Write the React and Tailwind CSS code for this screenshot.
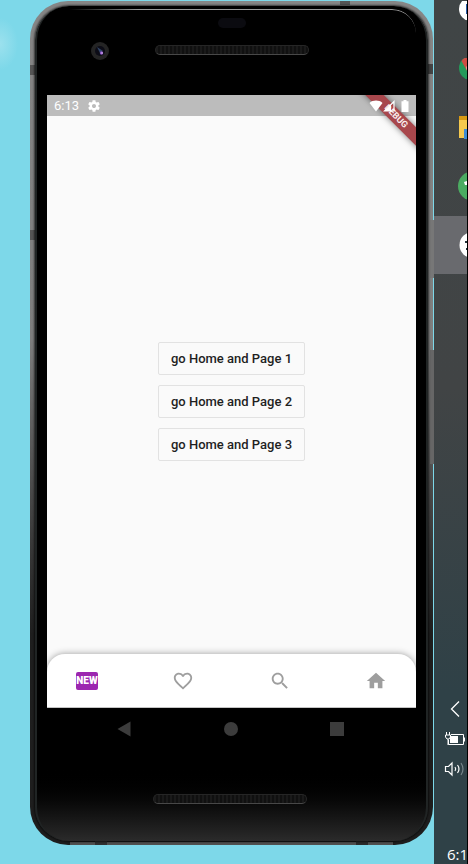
import React from "react";

const pages = [1, 2, 3];

function Gear() {
  return (
    <svg viewBox="0 0 24 24" className="size-3.5" fill="currentColor" aria-hidden="true">
      <path d="M19.43 12.98c.04-.32.07-.64.07-.98s-.03-.66-.07-.98l2.11-1.65c.19-.15.24-.42.12-.64l-2-3.46c-.12-.22-.39-.3-.61-.22l-2.49 1c-.52-.4-1.08-.73-1.69-.98l-.38-2.65C14.46 2.18 14.25 2 14 2h-4c-.25 0-.46.18-.49.42l-.38 2.65c-.61.25-1.17.59-1.69.98l-2.49-1c-.23-.09-.49 0-.61.22l-2 3.46c-.13.22-.07.49.12.64l2.11 1.65c-.04.32-.07.65-.07.98s.03.66.07.98l-2.11 1.65c-.19.15-.24.42-.12.64l2 3.46c.12.22.39.3.61.22l2.49-1c.52.4 1.08.73 1.69.98l.38 2.65c.03.24.24.42.49.42h4c.25 0 .46-.18.49-.42l.38-2.65c.61-.25 1.17-.59 1.69-.98l2.49 1c.23.09.49 0 .61-.22l2-3.46c.12-.22.07-.49-.12-.64l-2.11-1.65zM12 15.5c-1.93 0-3.5-1.57-3.5-3.5s1.57-3.5 3.5-3.5 3.5 1.57 3.5 3.5-1.57 3.5-3.5 3.5z" />
    </svg>
  );
}

function StatusBar() {
  return (
    <div className="z-20 col-start-1 row-start-1 flex items-center bg-transparent pr-[7px] pl-[7px] text-white">
      <span className="text-[13px] leading-5">6:13</span>
      <span className="ml-2">
        <Gear />
      </span>
      <span className="ml-auto flex items-center">
        <svg viewBox="0 0 14 12" className="h-3 w-3.5" fill="currentColor" aria-label="Wi-Fi">
          <path d="M0.5 3C4 -0.2 10 -0.2 13.5 3L7 11.5z" />
        </svg>
        <svg viewBox="0 0 12 12" className="h-3 w-3" fill="none" stroke="currentColor" aria-label="Signal">
          <path d="M11 1.5V11H1.5z" strokeWidth="1.2" />
          <path d="M8 4.5V11H1.5z" fill="currentColor" stroke="none" />
        </svg>
        <svg viewBox="0 0 8 12" className="ml-1.5 h-3 w-2" fill="currentColor" aria-label="Battery">
          <path d="M2.5 0h3v1.2H7.5V12h-7V1.2h2z" />
        </svg>
      </span>
    </div>
  );
}

function NewIcon() {
  return (
    <span className="flex h-[18px] w-[22px] items-center justify-center rounded-xs bg-[#9c27b0] text-[10px] leading-none font-black text-white">
      NEW
    </span>
  );
}

function BottomNav() {
  return (
    <nav className="z-10 col-start-1 row-start-3 flex items-center justify-between rounded-t-[18px] border-b border-[#c4c4c4] bg-white px-[29px] text-[#9e9e9e] shadow-[0_0_7px_rgba(0,0,0,0.38)]">
      <button type="button" aria-label="New">
        <NewIcon />
      </button>
      <button type="button" aria-label="Favorites">
        <svg viewBox="0 0 24 24" className="size-[22px]" fill="currentColor">
          <path d="M16.5 3c-1.74 0-3.41.81-4.5 2.09C10.91 3.81 9.24 3 7.5 3 4.42 3 2 5.42 2 8.5c0 3.78 3.4 6.86 8.55 11.54L12 21.35l1.45-1.32C18.6 15.36 22 12.28 22 8.5 22 5.42 19.58 3 16.5 3zm-4.4 15.55l-.1.1-.1-.1C7.14 14.24 4 11.39 4 8.5 4 6.5 5.5 5 7.5 5c1.54 0 3.04.99 3.57 2.36h1.87C13.46 5.99 14.96 5 16.5 5c2 0 3.5 1.5 3.5 3.5 0 2.89-3.14 5.74-7.9 10.05z" />
        </svg>
      </button>
      <button type="button" aria-label="Search">
        <svg viewBox="0 0 24 24" className="size-[22px]" fill="currentColor">
          <path d="M15.5 14h-.79l-.28-.27C15.41 12.59 16 11.11 16 9.5 16 5.91 13.09 3 9.5 3S3 5.91 3 9.5 5.91 16 9.5 16c1.61 0 3.09-.59 4.23-1.57l.27.28v.79l5 4.99L20.49 19l-4.99-5zm-6 0C7.01 14 5 11.99 5 9.5S7.01 5 9.5 5 14 7.01 14 9.5 11.99 14 9.5 14z" />
        </svg>
      </button>
      <button type="button" aria-label="Home">
        <svg viewBox="0 0 24 24" className="size-[22px]" fill="currentColor">
          <path d="M10 20v-6h4v6h5v-8h3L12 3 2 12h3v8z" />
        </svg>
      </button>
    </nav>
  );
}

function Screen() {
  return (
    <div className="relative grid flex-1 grid-cols-1 grid-rows-[21px_1fr_54px] overflow-hidden bg-[#fafafa]">
      <div className="col-start-1 row-start-1 bg-[#bcbcbc]" />
      <main className="col-start-1 row-span-3 row-start-1 flex flex-col items-center justify-center gap-2.5">
        {pages.map((n) => (
          <button
            key={n}
            type="button"
            className="h-[33px] rounded-xs border border-[#e2e2e2] px-3 text-[13px] leading-4 font-medium text-[#1f1f1f]"
          >
            go Home and Page {n}
          </button>
        ))}
      </main>
      <div className="absolute -top-px -right-[38px] z-10 mt-4 w-[116px] rotate-45 bg-[#a8474c] text-center text-[9px] leading-[13px] font-bold text-[#faeeee] shadow-[0_0_6px_rgba(0,0,0,0.5)]">
        DEBUG
      </div>
      <StatusBar />
      <BottomNav />
    </div>
  );
}

function Grille() {
  return (
    <div className="h-2.5 rounded-full border border-[#262626] border-b-[#484848] bg-[repeating-linear-gradient(90deg,#1a1a1a_0_2px,#101010_2px_4px)]" />
  );
}

function Phone() {
  return (
    <div className="relative flex flex-1 flex-col rounded-[38px] bg-linear-to-b from-[#868686] via-[#7e7e7e] via-40% to-[#1e1e1e] to-75% p-[5px] pb-1">
      <div className="absolute top-16 left-0 h-2.5 w-[5px] bg-[#555555]" />
      <div className="absolute top-[229px] left-0 h-2.5 w-[5px] bg-[#555555]" />
      <div className="absolute top-[63px] right-0 h-2.5 w-[5px] bg-[#444444]" />
      <div className="absolute top-[219px] -right-px h-[58px] w-1 bg-[#777777]" />
      <div className="absolute top-[349px] -right-px h-[114px] w-1 bg-[#666666]" />
      <div className="absolute top-0 right-[83px] h-1 w-2.5 bg-[#555555]" />
      <div className="absolute right-10 bottom-0 left-10 h-[3px] bg-[#505050]" />
      <div className="absolute bottom-0 left-[65px] h-1 w-3 bg-[#303030]" />
      <div className="absolute right-[65px] bottom-0 h-1 w-3 bg-[#2b2b2b]" />
      <div className="relative flex flex-1 flex-col rounded-[34px] border-x-2 border-[#202424] bg-linear-to-b from-black from-91% to-[#2b2b2b] px-2.5 shadow-[0_0_2px_1px_rgba(0,0,0,0.6)]">
        <div className="absolute top-[3px] right-2.5 left-8 h-6 rounded-tr-[24px] border-t border-[#9a9a9a] mask-l-from-80%" />
        <div className="flex h-[89px] flex-col items-stretch pt-3">
          <div className="mx-auto h-2.5 w-7 rounded-full bg-[#0b0b10]" />
          <div className="mt-3.5 grid h-[18px] grid-cols-[1fr_154px_1fr] items-center">
            <div className="ml-11 flex size-[18px] items-center justify-center rounded-full bg-[#242424]">
              <svg viewBox="0 0 10 10" className="size-2.5" aria-hidden="true">
                <circle cx="5" cy="5" r="5" fill="#0c0c16" />
                <path d="M2 1L8 5L5 7z" fill="#314568" />
                <circle cx="6.5" cy="7" r="1.7" fill="#8b52c4" />
                <circle cx="7" cy="7" r="0.8" fill="#e3c4f6" />
              </svg>
            </div>
            <div className="-mt-0.5">
              <Grille />
            </div>
          </div>
        </div>
        <Screen />
        <div className="flex h-[42px] items-center justify-between pr-[72px] pl-[70px]">
          <button type="button" aria-label="Back">
            <svg viewBox="0 0 14 16" className="h-4 w-3.5" fill="#3c3c3c">
              <path d="M13.5 0.5v15L0.5 8z" />
            </svg>
          </button>
          <button type="button" aria-label="Home screen">
            <span className="block size-3.5 rounded-full bg-[#3c3c3c]" />
          </button>
          <button type="button" aria-label="Recent apps">
            <span className="block size-3.5 bg-[#3c3c3c]" />
          </button>
        </div>
        <div className="flex h-[91px] justify-center pt-11 pr-1">
          <div className="w-[154px]">
            <Grille />
          </div>
        </div>
      </div>
    </div>
  );
}

function AppSlot({ label, active, children }) {
  return (
    <button
      type="button"
      aria-label={label}
      className={
        "flex h-[58px] w-full shrink-0 items-center overflow-hidden pl-6 " + (active ? "bg-[#696a6e]" : "")
      }
    >
      {children}
    </button>
  );
}

function Taskbar() {
  return (
    <aside className="flex w-[34px] shrink-0 flex-col overflow-hidden border-r border-black bg-linear-to-b from-[#404546] via-[#414445] via-45% to-[#2f4147] to-80% text-white">
      <div className="-mt-4 flex flex-col">
        <AppSlot label="Browser">
          <svg viewBox="0 0 24 24" className="size-6 shrink-0">
            <circle cx="13" cy="8" r="12" fill="#ffffff" />
            <path d="M8 3h12v10H8z" fill="#2c5ba8" />
          </svg>
        </AppSlot>
        <AppSlot label="Chrome">
          <svg viewBox="0 0 26 26" className="size-[26px] shrink-0">
            <circle cx="13" cy="10" r="12" fill="#25995a" />
            <path d="M3.5 3A12 12 0 0 1 25 9L9 13z" fill="#cf4d43" />
            <circle cx="14" cy="10" r="5.5" fill="#ffffff" />
            <circle cx="14" cy="10" r="4" fill="#3f7fe0" />
          </svg>
        </AppSlot>
        <AppSlot label="Files">
          <svg viewBox="0 0 26 26" className="size-[26px] shrink-0">
            <path d="M1 0h10v5H1z" fill="#d89a13" />
            <path d="M1 4h24v18H1z" fill="#f5c94f" />
            <path d="M6 13h18v10H6z" fill="#3f8bd4" />
          </svg>
        </AppSlot>
        <AppSlot label="Android Studio">
          <svg viewBox="0 0 30 30" className="size-[30px] shrink-0">
            <circle cx="14.5" cy="14" r="14.5" fill="#4bab61" />
            <path d="M6 10l3-1v4H7z" fill="#ffffff" />
          </svg>
        </AppSlot>
        <AppSlot label="Emulator" active>
          <svg viewBox="0 0 28 28" className="size-7 shrink-0">
            <circle cx="14.5" cy="14" r="13" fill="#ffffff" />
            <path d="M7 10h2v2H7zM8 17h2v2H8z" fill="#26323a" />
          </svg>
        </AppSlot>
      </div>
      <div className="mt-auto flex flex-col pl-2.5">
        <button type="button" aria-label="Show hidden icons" className="flex h-[30px] items-center pl-1.5">
          <svg viewBox="0 0 10 16" className="h-4 w-2.5" fill="none" stroke="currentColor" strokeWidth="1.3">
            <path d="M9 0.5L1.5 8L9 15.5" />
          </svg>
        </button>
        <button type="button" aria-label="Power" className="flex h-[30px] items-center">
          <svg viewBox="0 0 22 14" className="h-3.5 w-[22px]" fill="none" stroke="currentColor">
            <path d="M7 2.5H19.5V12.5H4.5V8M20.5 5.5V9.5" />
            <path d="M6 4h8v7H6z" fill="currentColor" stroke="none" />
            <path d="M2.5 0V3M5.5 0V3M1.5 3h5v2l-1.5 2h-2L1.5 5zM4 7v6" />
          </svg>
        </button>
        <button type="button" aria-label="Volume" className="flex h-[30px] items-center">
          <svg viewBox="0 0 22 16" className="h-4 w-[22px]" fill="none" stroke="currentColor" strokeWidth="1.2">
            <path d="M1.5 5.5H4.5L8 2V14L4.5 10.5H1.5z" />
            <path d="M11 6q1.5 2 0 4M13.5 4q3 4 0 8" />
            <path d="M17 2q4 6 0 12" stroke="#76858a" />
          </svg>
        </button>
        <div className="mt-[60px] h-5 pl-[3px] font-['Open_Sans','Noto_Sans',sans-serif] text-[15px] leading-5">
          6:1
        </div>
      </div>
    </aside>
  );
}

export default function App() {
  return (
    <div className="flex min-h-screen bg-[#7dd8e9] font-[Roboto,'Liberation_Sans',sans-serif]">
      <div className="flex flex-1 flex-col bg-[radial-gradient(ellipse_18px_26px_at_0_44px,#9ce1ee,transparent)] pt-px pr-px pb-[19px] pl-[30px]">
        <Phone />
      </div>
      <Taskbar />
    </div>
  );
}
